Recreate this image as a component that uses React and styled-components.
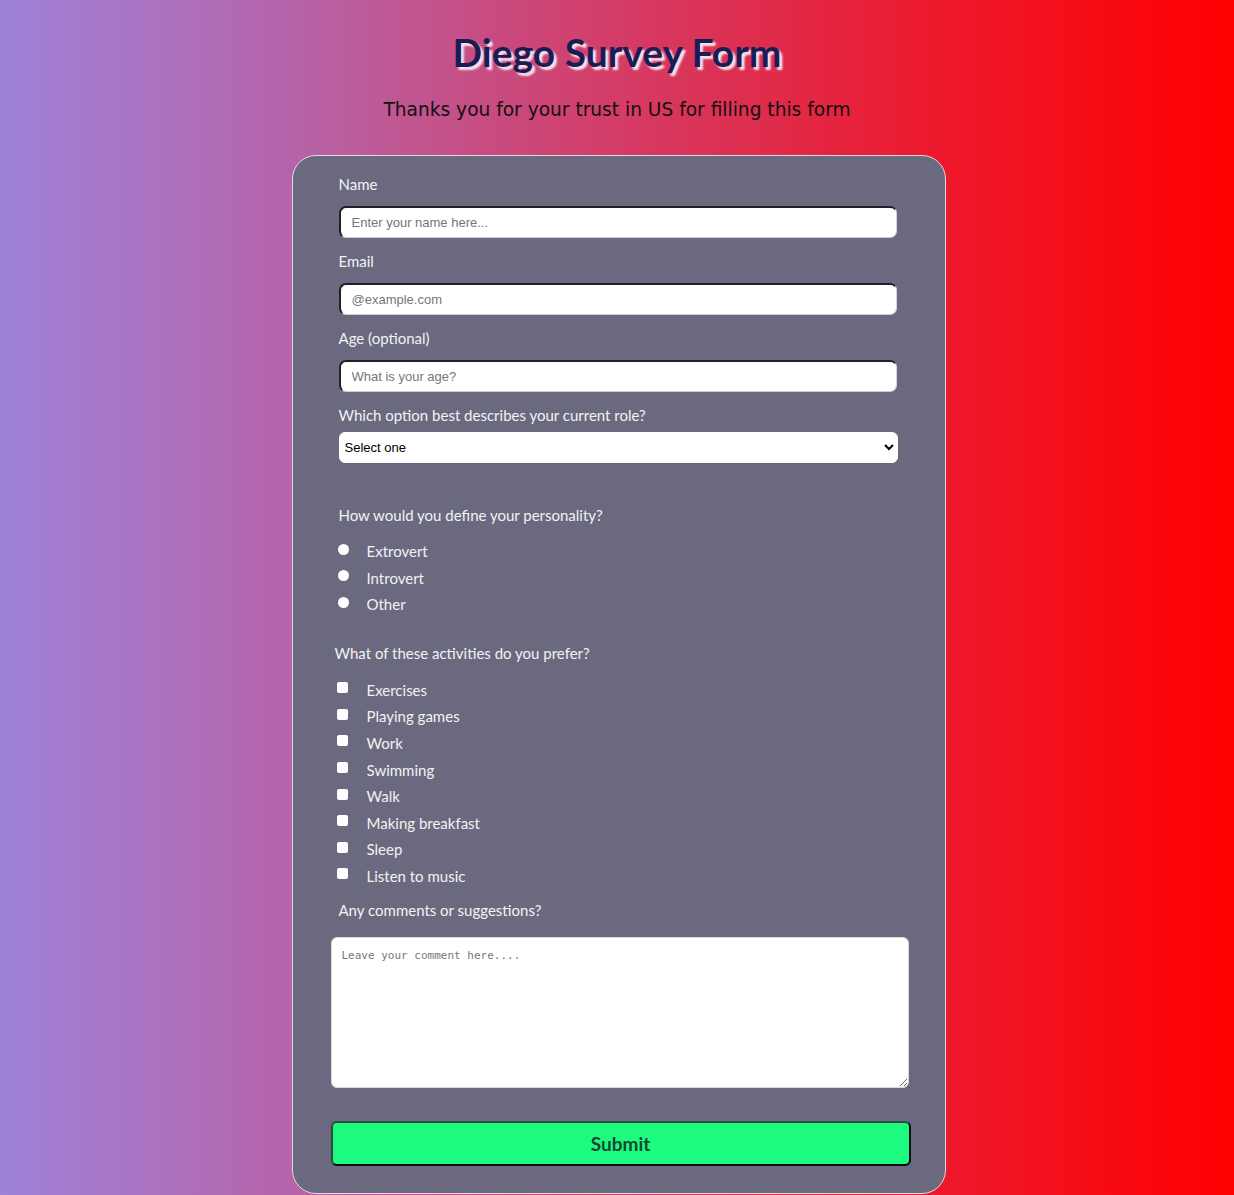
import React from "react";
import styled, { createGlobalStyle } from "styled-components";

const GlobalStyle = createGlobalStyle`
  body {
    margin: 0;
    min-height: 100vh;
    background: linear-gradient(90deg, #9e82d9 0%, #b762a6 25%, #d43c66 50%, #ec1a2e 75%, #ff0000 100%);
    font-family: "Lato", "Open Sans", sans-serif;
  }
`;

const Page = styled.main`
  display: flex;
  flex-direction: column;
  align-items: center;
  padding-top: 28px;
`;

const Title = styled.h1`
  margin: 0;
  font-family: "Lato", sans-serif;
  font-size: 39px;
  line-height: 48px;
  font-weight: 700;
  color: #1c1c55;
  text-shadow: 3px 3px 2px #f6e6ee;
`;

const Subtitle = styled.p`
  margin: 22px 0 33px;
  font-family: "DejaVu Sans", Verdana, sans-serif;
  font-size: 18.6px;
  line-height: 24px;
  color: #111;
`;

const Card = styled.form`
  box-sizing: border-box;
  width: 654px;
  margin-left: 3px;
  padding: 18px 36px 27px 38px;
  background: #6a6980;
  border: 1px solid #e6d6de;
  border-radius: 24px;
  color: #f2f2f2;
`;

const Field = styled.div`
  margin: 0 0 ${(p) => p.$gap ?? 13}px 8px;
  width: 558px;
`;

const Label = styled.label`
  display: block;
  font-size: 15px;
  line-height: 20px;
  margin-bottom: ${(p) => p.$gap ?? 12}px;
  margin-left: ${(p) => p.$shift ?? 0}px;
`;

const TextInput = styled.input`
  box-sizing: border-box;
  width: 100%;
  height: 32px;
  padding: 0 11px;
  border-style: solid;
  border-width: 2px 1px 1px 2px;
  border-color: #1f1f26 #d6d6d6 #cfcfcf #1f1f26;
  border-radius: 7px;
  background: #fff;
  font-family: "Liberation Sans", Arial, sans-serif;
  font-size: 13px;
  &::placeholder {
    color: #767676;
  }
`;

const Select = styled.select`
  box-sizing: border-box;
  width: 559px;
  height: 31px;
  padding: 0 1px;
  border: 1px solid #fff;
  border-radius: 6px;
  background: #fff;
  font-family: "Liberation Sans", Arial, sans-serif;
  font-size: 13px;
  color: #000;
`;

const OptionList = styled.div`
  display: flex;
  flex-direction: column;
`;

const Option = styled.label`
  display: flex;
  align-items: center;
  height: ${(p) => p.$h}px;
  font-size: 15px;
`;

const Radio = styled.input.attrs({ type: "radio" })`
  appearance: none;
  margin: 0 18px 4px -1px;
  width: 11px;
  height: 11px;
  border-radius: 50%;
  background: #fff;
`;

const Check = styled.input.attrs({ type: "checkbox" })`
  appearance: none;
  margin: 0 19px 4px -2px;
  width: 11px;
  height: 11px;
  border-radius: 2px;
  background: #fff;
`;

const Comment = styled.textarea`
  box-sizing: border-box;
  display: block;
  width: 578px;
  height: 151px;
  padding: 11px 10px;
  border: 1px solid #d8d8d8;
  border-radius: 6px;
  background: #fff;
  font-family: "DejaVu Sans Mono", monospace;
  font-size: 11px;
  &::placeholder {
    color: #777;
  }
`;

const Submit = styled.button`
  display: block;
  width: 580px;
  height: 45px;
  margin-top: 33px;
  border: 2px solid #2d4d3c;
  border-bottom-color: #0c0c0c;
  border-right-color: #0c0c0c;
  border-radius: 6px;
  background: #1cfb80;
  color: #16482f;
  font-family: "Lato", sans-serif;
  font-weight: 700;
  font-size: 19px;
`;

const personalities = ["Extrovert", "Introvert", "Other"];
const activities = [
  "Exercises",
  "Playing games",
  "Work",
  "Swimming",
  "Walk",
  "Making breakfast",
  "Sleep",
  "Listen to music",
];

export default function App() {
  return (
    <>
      <GlobalStyle />
      <Page>
        <Title>Diego Survey Form</Title>
        <Subtitle>Thanks you for your trust in US for filling this form</Subtitle>
        <Card onSubmit={(e) => e.preventDefault()}>
          <Field>
            <Label htmlFor="name">Name</Label>
            <TextInput id="name" placeholder="Enter your name here..." />
          </Field>
          <Field>
            <Label htmlFor="email">Email</Label>
            <TextInput id="email" type="email" placeholder="@example.com" />
          </Field>
          <Field>
            <Label htmlFor="age">Age (optional)</Label>
            <TextInput id="age" placeholder="What is your age?" />
          </Field>
          <Field $gap={42}>
            <Label htmlFor="role" $gap={7}>Which option best describes your current role?</Label>
            <Select id="role" defaultValue="">
              <option value="">Select one</option>
              <option>Student</option>
              <option>Full time job</option>
              <option>Prefer not to say</option>
            </Select>
          </Field>
          <Field $gap={25}>
            <Label $gap={13}>How would you define your personality?</Label>
            <OptionList>
              {personalities.map((p) => (
                <Option key={p} $h={26.5}>
                  <Radio name="personality" value={p} />
                  {p}
                </Option>
              ))}
            </OptionList>
          </Field>
          <Field $gap={11}>
            <Label $gap={14} $shift={-4}>What of these activities do you prefer?</Label>
            <OptionList>
              {activities.map((a) => (
                <Option key={a} $h={26.6}>
                  <Check value={a} />
                  {a}
                </Option>
              ))}
            </OptionList>
          </Field>
          <Field $gap={0}>
            <Label htmlFor="comment" $gap={17}>Any comments or suggestions?</Label>
          </Field>
          <Comment id="comment" placeholder="Leave your comment here...." />
          <Submit type="submit">Submit</Submit>
        </Card>
      </Page>
    </>
  );
}
